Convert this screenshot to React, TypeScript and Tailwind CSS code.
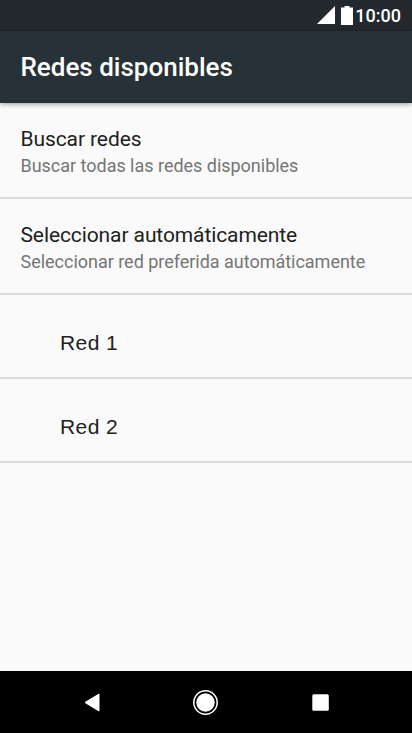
const networks = ["Red 1", "Red 2"];

function StatusBar() {
    return (
        <div className="flex h-[31px] items-center justify-end bg-[#22282b] pr-[11px] text-white">
            <svg
                className="-mt-px"
                width="18"
                height="18"
                viewBox="0 0 18 18"
                fill="currentColor"
            >
                <path d="M18 0v18H0z" />
            </svg>
            <svg
                className="-mt-px ml-[6px]"
                width="12"
                height="19"
                viewBox="0 0 12 19"
                fill="currentColor"
            >
                <path d="M3.500 0h5v1.500H12V19H0V1.500h3.500z" />
            </svg>
            <span className="ml-[2px] text-[18px] leading-none font-medium">
                10:00
            </span>
        </div>
    );
}

function Option({ title, summary }: { title: string; summary: string }) {
    return (
        <div className="flex h-24 flex-col border-b-2 border-[#dcdcdc] pt-[23px] pl-[20.500px]">
            <span className="text-[21px] leading-[26px] tracking-[-0.1px] text-[#212121]">
                {title}
            </span>
            <span className="pt-px text-[18px] leading-[26px] tracking-[-0.020px] text-[#757575]">
                {summary}
            </span>
        </div>
    );
}

function NavBar() {
    return (
        <nav className="h-[62px] bg-black text-white">
            <svg width="412" height="62" viewBox="0 0 412 62" fill="currentColor">
                <path
                    d="M85 31.500l14-8.500v17z"
                    stroke="currentColor"
                    strokeLinejoin="round"
                />
                <circle cx="205.500" cy="31.500" r="9.200" />
                <circle
                    cx="205.500"
                    cy="31.500"
                    r="11.700"
                    fill="none"
                    stroke="currentColor"
                    strokeWidth="1.500"
                />
                <rect x="312.300" y="23.200" width="16.500" height="16.500" rx="1.500" />
            </svg>
        </nav>
    );
}

export default function App() {
    return (
        <div className="flex h-[733px] w-[412px] flex-col overflow-hidden bg-[#fafafa] font-[Roboto,sans-serif]">
            <StatusBar />
            <header className="flex h-[72px] items-center bg-[#263238] pl-[20.500px] shadow-[0_1px_5px_rgba(0,0,0,0.4)]">
                <h1 className="text-[26px] font-medium text-white">
                    Redes disponibles
                </h1>
            </header>
            <main className="flex-1">
                <Option
                    title="Buscar redes"
                    summary="Buscar todas las redes disponibles"
                />
                <Option
                    title="Seleccionar automáticamente"
                    summary="Seleccionar red preferida automáticamente"
                />
                {networks.map((name) => (
                    <div
                        key={name}
                        className="flex h-[84px] items-center border-b-2 border-[#dcdcdc] pt-[14px] pl-[60px] font-['Liberation_Sans',sans-serif] text-[21px] tracking-[0.400px] text-[#212121]"
                    >
                        {name}
                    </div>
                ))}
            </main>
            <NavBar />
        </div>
    );
}
